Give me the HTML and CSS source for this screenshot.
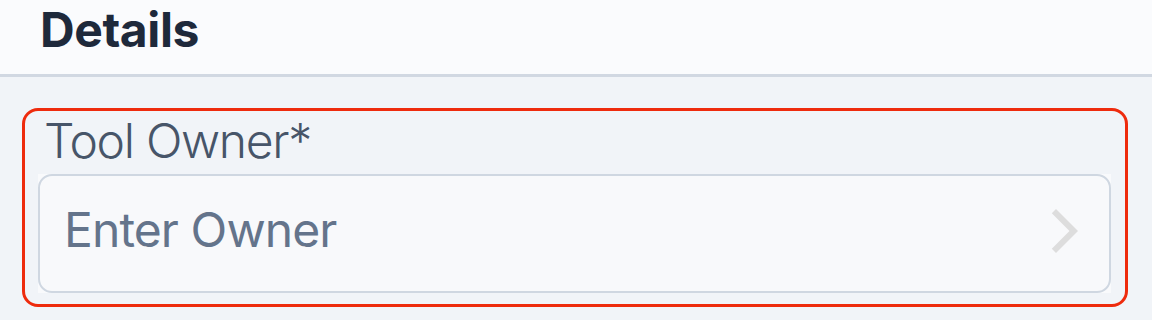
FILE: index.html
```html
<!DOCTYPE html>
<html lang="en">
<head>
<meta charset="utf-8">
<title>Details</title>
<link rel="stylesheet" href="styles.css">
</head>
<body>
<header class="header">
  <h1 class="title">Details</h1>
</header>
<main class="content">
  <section class="field field--error">
    <label class="field-label">Tool Owner*</label>
    <div class="input-wrap">
      <div class="input">
        <span class="placeholder">Enter Owner</span>
        <svg class="chevron" width="30" height="44" viewBox="0 0 30 44" aria-hidden="true">
          <polygon points="6,0 28,22 6,44 1.8,39.8 19.5,22 1.8,4.2" fill="#dddddd"/>
        </svg>
      </div>
    </div>
  </section>
</main>
</body>
</html>
```

FILE: styles.css
```css
* { box-sizing: border-box; }
html, body { margin: 0; padding: 0; }
body {
  width: 1152px;
  height: 320px;
  overflow: hidden;
  background: #f1f4f8;
  font-family: Inter, "Noto Sans", "Liberation Sans", sans-serif;
}
.header {
  height: 77px;
  background: #fafbfd;
  border-bottom: 3px solid #d1d8e2;
  padding-left: 40px;
}
.title {
  margin: 0;
  font-size: 48px;
  line-height: 48px;
  padding-top: 6px;
  font-weight: 700;
  letter-spacing: -0.4px;
  color: #1e293b;
}
.content {
  padding: 31px 24px 0 22px;
}
.field {
  border: 3px solid #ee2b0d;
  border-radius: 16px;
  padding: 6px 14px 11px 13px;
}
.field-label {
  display: block;
  font-size: 48px;
  line-height: 48px;
  font-weight: 300;
  letter-spacing: -1.3px;
  color: #475569;
  padding-left: 6px;
  margin-bottom: 9px;
}
.input-wrap {
  background: #f9fafc;
}
.input {
  height: 119px;
  border: 2px solid #cfd7e1;
  border-radius: 14px;
  background: #f8f9fb;
  display: flex;
  align-items: flex-start;
  justify-content: space-between;
  padding: 30px 29px 0 24px;
}
.placeholder {
  font-size: 48px;
  line-height: 48px;
  letter-spacing: -0.9px;
  color: #64748b;
}
.chevron {
  display: block;
  margin-top: 3px;
}
```
